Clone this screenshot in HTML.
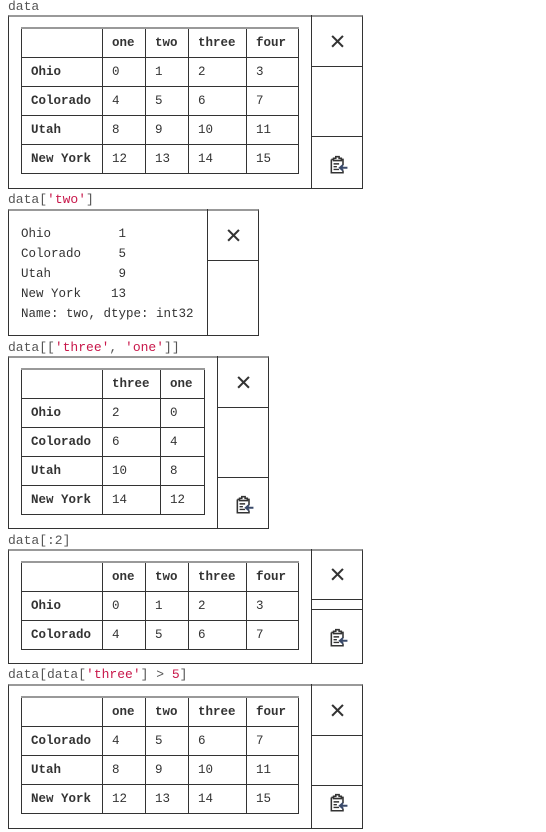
<!DOCTYPE html>
<html><head><style>
*{margin:0;padding:0;box-sizing:border-box}
body{width:546px;height:832px;background:#fff;position:relative;font-family:"Liberation Mono","DejaVu Sans Mono",monospace;font-size:12.5px;color:#333;overflow:hidden}
.lbl{position:absolute;left:8px;font-size:13px;color:#555;line-height:14px}
.s{color:#c8174a}
.box{position:absolute;border:1px solid #333;border-top:2px solid #999}
.side{position:absolute;top:-2px;bottom:-1px;border-left:1px solid #333}
.cell{position:absolute;left:0;right:0;border-bottom:1px solid #333}
.x{font-family:"DejaVu Sans",sans-serif;font-size:21px;font-weight:bold;color:#333;text-align:center}
table{position:absolute;border-collapse:collapse;table-layout:fixed}
td,th{border:1px solid #333;height:29px;padding:0 9px;text-align:left;font-weight:normal;font-size:12.5px;white-space:nowrap;overflow:visible}
tr:first-child td{border-top:2px solid #999}
tr td:first-child{font-weight:bold}
.pre{position:absolute;left:12px;line-height:20px;white-space:pre;font-size:12.5px}
svg{position:absolute}
</style></head><body>

<div class="lbl" style="top:0">data</div>
<div class="box" style="left:8px;top:15px;width:355px;height:174px">
 <table style="left:12px;top:10px;width:277px">
  <colgroup><col style="width:81px"><col style="width:43px"><col style="width:43px"><col style="width:58px"><col style="width:52px"></colgroup>
  <tr><td></td><td><b>one</b></td><td><b>two</b></td><td><b>three</b></td><td><b>four</b></td></tr>
  <tr><td>Ohio</td><td>0</td><td>1</td><td>2</td><td>3</td></tr>
  <tr><td>Colorado</td><td>4</td><td>5</td><td>6</td><td>7</td></tr>
  <tr><td>Utah</td><td>8</td><td>9</td><td>10</td><td>11</td></tr>
  <tr><td>New York</td><td>12</td><td>13</td><td>14</td><td>15</td></tr>
 </table>
 <div class="side" style="left:302px;width:52px">
  <div class="cell x" style="top:0;height:52px;line-height:54px">✕</div>
  <div class="cell" style="top:52px;height:70px"></div>
  <svg style="left:16px;top:140px" width="20" height="20" viewBox="0 0 18 18"><path d="M5 3h2V1.5h3V3h2v2H5z M3 4h2 M12 4h1.5v5 M3 4v12h10.5v-2" fill="none" stroke="#333" stroke-width="1.4"/><path d="M5 8h5M5 10.5h3M5 13h5" stroke="#333" stroke-width="1.3"/><path d="M17.5 11.5h-6.5M13.5 9l-2.8 2.5 2.8 2.5" fill="none" stroke="#3a4a6a" stroke-width="1.8"/></svg>
 </div>
</div>

<div class="lbl" style="top:193px">data[<span class="s">'two'</span>]</div>
<div class="box" style="left:8px;top:209px;width:251px;height:127px">
 <div class="pre" style="top:13px">Ohio         1
Colorado     5
Utah         9
New York    13
Name: two, dtype: int32</div>
 <div class="side" style="left:198px;width:52px">
  <div class="cell x" style="top:0;height:52px;line-height:54px">✕</div>
 </div>
</div>

<div class="lbl" style="top:341px">data[[<span class="s">'three'</span>, <span class="s">'one'</span>]]</div>
<div class="box" style="left:8px;top:356px;width:261px;height:173px">
 <table style="left:12px;top:10px;width:184px">
  <colgroup><col style="width:81px"><col style="width:58px"><col style="width:44px"></colgroup>
  <tr><td></td><td><b>three</b></td><td><b>one</b></td></tr>
  <tr><td>Ohio</td><td>2</td><td>0</td></tr>
  <tr><td>Colorado</td><td>6</td><td>4</td></tr>
  <tr><td>Utah</td><td>10</td><td>8</td></tr>
  <tr><td>New York</td><td>14</td><td>12</td></tr>
 </table>
 <div class="side" style="left:208px;width:52px">
  <div class="cell x" style="top:0;height:52px;line-height:54px">✕</div>
  <div class="cell" style="top:52px;height:70px"></div>
  <svg style="left:16px;top:139px" width="20" height="20" viewBox="0 0 18 18"><path d="M5 3h2V1.5h3V3h2v2H5z M3 4h2 M12 4h1.5v5 M3 4v12h10.5v-2" fill="none" stroke="#333" stroke-width="1.4"/><path d="M5 8h5M5 10.5h3M5 13h5" stroke="#333" stroke-width="1.3"/><path d="M17.5 11.5h-6.5M13.5 9l-2.8 2.5 2.8 2.5" fill="none" stroke="#3a4a6a" stroke-width="1.8"/></svg>
 </div>
</div>

<div class="lbl" style="top:534px">data[:2]</div>
<div class="box" style="left:8px;top:549px;width:355px;height:115px">
 <table style="left:12px;top:10px;width:277px">
  <colgroup><col style="width:81px"><col style="width:43px"><col style="width:43px"><col style="width:58px"><col style="width:52px"></colgroup>
  <tr><td></td><td><b>one</b></td><td><b>two</b></td><td><b>three</b></td><td><b>four</b></td></tr>
  <tr><td>Ohio</td><td>0</td><td>1</td><td>2</td><td>3</td></tr>
  <tr><td>Colorado</td><td>4</td><td>5</td><td>6</td><td>7</td></tr>
 </table>
 <div class="side" style="left:302px;width:52px">
  <div class="cell x" style="top:0;height:51px;line-height:53px">✕</div>
  <div class="cell" style="top:51px;height:10px"></div>
  <svg style="left:16px;top:79px" width="20" height="20" viewBox="0 0 18 18"><path d="M5 3h2V1.5h3V3h2v2H5z M3 4h2 M12 4h1.5v5 M3 4v12h10.5v-2" fill="none" stroke="#333" stroke-width="1.4"/><path d="M5 8h5M5 10.5h3M5 13h5" stroke="#333" stroke-width="1.3"/><path d="M17.5 11.5h-6.5M13.5 9l-2.8 2.5 2.8 2.5" fill="none" stroke="#3a4a6a" stroke-width="1.8"/></svg>
 </div>
</div>

<div class="lbl" style="top:668px">data[data[<span class="s">'three'</span>] &gt; <span class="s">5</span>]</div>
<div class="box" style="left:8px;top:684px;width:355px;height:145px">
 <table style="left:12px;top:10px;width:277px">
  <colgroup><col style="width:81px"><col style="width:43px"><col style="width:43px"><col style="width:58px"><col style="width:52px"></colgroup>
  <tr><td></td><td><b>one</b></td><td><b>two</b></td><td><b>three</b></td><td><b>four</b></td></tr>
  <tr><td>Colorado</td><td>4</td><td>5</td><td>6</td><td>7</td></tr>
  <tr><td>Utah</td><td>8</td><td>9</td><td>10</td><td>11</td></tr>
  <tr><td>New York</td><td>12</td><td>13</td><td>14</td><td>15</td></tr>
 </table>
 <div class="side" style="left:302px;width:52px">
  <div class="cell x" style="top:0;height:52px;line-height:54px">✕</div>
  <div class="cell" style="top:52px;height:50px"></div>
  <svg style="left:16px;top:109px" width="20" height="20" viewBox="0 0 18 18"><path d="M5 3h2V1.5h3V3h2v2H5z M3 4h2 M12 4h1.5v5 M3 4v12h10.5v-2" fill="none" stroke="#333" stroke-width="1.4"/><path d="M5 8h5M5 10.5h3M5 13h5" stroke="#333" stroke-width="1.3"/><path d="M17.5 11.5h-6.5M13.5 9l-2.8 2.5 2.8 2.5" fill="none" stroke="#3a4a6a" stroke-width="1.8"/></svg>
 </div>
</div>

</body></html>
